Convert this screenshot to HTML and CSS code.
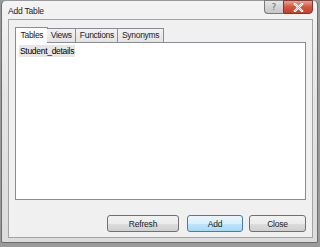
FILE: index.html
```html
<!DOCTYPE html>
<html lang="en">
<head>
    <meta charset="UTF-8">
    <title>Add Table</title>
    <link rel="stylesheet" href="styles.css">
</head>
<body>
    <div class="window">
        <div class="titlebar">
            <span class="title">Add Table</span>
            <div class="caption-buttons">
                <button class="cap help">?</button>
                <button class="cap close">
                    <svg width="11" height="9" viewBox="0 0 11 9">
                        <path d="M2 1 L9 8 M9 1 L2 8" stroke="#ffffff" stroke-width="2.4" stroke-linecap="square"/>
                        <path d="M2 1 L9 8 M9 1 L2 8" stroke="#7a2a20" stroke-width="0.6" opacity="0.5"/>
                    </svg>
                </button>
            </div>
        </div>
        <div class="client">
            <div class="tabs">
                <div class="tab active">Tables</div>
                <div class="tab">Views</div>
                <div class="tab">Functions</div>
                <div class="tab">Synonyms</div>
            </div>
            <div class="panel">
                <div class="list-item">Student_details</div>
            </div>
            <div class="actions">
                <button class="button refresh">Refresh</button>
                <button class="button default">Add</button>
                <button class="button">Close</button>
            </div>
        </div>
    </div>
</body>
</html>
```
FILE: styles.css
```css
body {
    margin: 0;
    background: #9a9a9a;
    font-family: "Liberation Sans", Arial, sans-serif;
    font-size: 8.5px;
    letter-spacing: -0.3px;
    color: #000;
    width: 320px;
    height: 247px;
    overflow: hidden;
}
.window {
    margin: 0 2px 0 1px;
    height: 243px;
    box-sizing: border-box;
    background: linear-gradient(#f4f4f4, #e4e4e4 40%, #dcdcdc);
    border: 1px solid #6e6e6e;
    border-top-color: #9a9a9a;
    border-radius: 5px 5px 2px 2px;
    padding: 0 4px 4px 6px;
    display: flex;
    flex-direction: column;
}
.titlebar {
    height: 18px;
    display: flex;
    justify-content: space-between;
    align-items: flex-start;
}
.title {
    margin-top: 5px;
    font-size: 8.5px;
    letter-spacing: -0.2px;
    color: #1c1c1c;
}
.caption-buttons {
    display: flex;
    margin-top: -1px;
}
.cap {
    height: 14px;
    border: 1px solid #7a7a7a;
    padding: 0;
    margin: 0;
    font-family: "DejaVu Sans", sans-serif;
    letter-spacing: 0;
}
.help {
    width: 19px;
    border-radius: 0 0 0 4px;
    border-right: none;
    background: linear-gradient(#e8e8e8, #d4d4d4 50%, #c6c6c6);
    color: #6a6a6a;
    font-size: 9px;
    line-height: 12px;
}
.close {
    width: 30px;
    border-color: #7a3a30;
    border-radius: 0 0 4px 0;
    background: linear-gradient(#e8a393, #d2553f 50%, #c2432c);
    display: flex;
    align-items: center;
    justify-content: center;
}
.client {
    flex: 1;
    background: #f0f0f0;
    border: 1px solid #a4a4a4;
    padding: 7px 6px 0 6px;
    display: flex;
    flex-direction: column;
}
.tabs {
    display: flex;
    align-items: flex-end;
    height: 15px;
    position: relative;
    z-index: 1;
}
.tab {
    height: 13px;
    line-height: 13px;
    padding: 0 3.5px;
    border: 1px solid #898c95;
    border-bottom: none;
    border-left: none;
    background: linear-gradient(#f2f2f2, #e3e3e3);
    color: #1a1a1a;
}
.tab.active {
    height: 15px;
    line-height: 14px;
    background: #ffffff;
    margin-bottom: -1px;
    padding: 0 4px 0 4.5px;
    border-left: 1px solid #898c95;
    margin-right: -1px;
}
.panel {
    height: 158px;
    box-sizing: border-box;
    background: #ffffff;
    border: 1px solid #898c95;
    padding: 2px 3px;
}
.list-item {
    display: inline-block;
    background: #e6e6e6;
    padding: 1px 1px;
    line-height: 10px;
}
.actions {
    display: flex;
    justify-content: flex-end;
    gap: 8px;
    margin-top: 15px;
}
.button {
    width: 57px;
    height: 17px;
    padding: 0;
    font-family: "Liberation Sans", Arial, sans-serif;
    font-size: 8.5px;
    letter-spacing: -0.2px;
    color: #1a1a1a;
    border: 1px solid #707070;
    border-radius: 3px;
    background: linear-gradient(#f2f2f2, #ebebeb 50%, #dddddd 51%, #cfcfcf);
}
.button.refresh {
    width: 72px;
}
.button.default {
    width: 56px;
    margin-right: -2px;
    border-color: #3c7fb1;
    background: linear-gradient(#eaf6fd, #d9f0fc 50%, #bee6fd 51%, #a7d9f5);
}
```
